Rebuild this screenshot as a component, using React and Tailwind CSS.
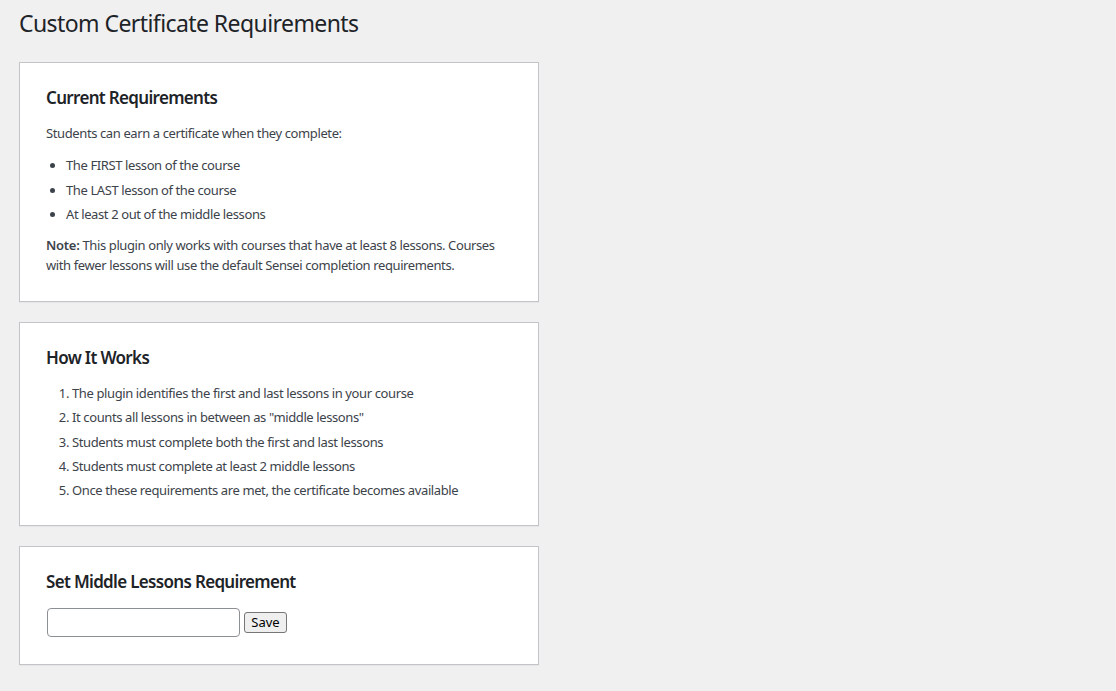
export default function App() {
  const font = { fontFamily: '"Noto Sans", "Open Sans", sans-serif' };
  return (
    <div className="min-h-[691px] bg-[#f0f0f1] text-[#3c434a] text-[13px] tracking-[-0.03em]" style={font}>
      <div className="pl-[19px] pt-[8px] pb-[20px]">
        <h1 className="text-[23px] leading-[30px] font-normal text-[#1d2327] tracking-[-0.025em]">Custom Certificate Requirements</h1>

        <div className="w-[520px] mt-[24px] bg-white border border-[#c3c4c7] shadow-[0_1px_1px_rgba(0,0,0,0.04)] px-[26px] pt-[24px] pb-[26px]">
          <h2 className="text-[17px] leading-[22px] font-semibold text-[#1d2327] tracking-[-0.04em]">Current Requirements</h2>
          <p className="mt-[14px] leading-[20px]">Students can earn a certificate when they complete:</p>
          <ul className="mt-[12px] pl-[20px] list-disc flex flex-col gap-[4.5px]">
            <li className="leading-[20px]">The FIRST lesson of the course</li>
            <li className="leading-[20px]">The LAST lesson of the course</li>
            <li className="leading-[20px]">At least 2 out of the middle lessons</li>
          </ul>
          <p className="mt-[11px] leading-[20px]">
            <strong className="font-semibold tracking-[-0.02em]">Note:</strong>{" "}This plugin only works with courses that have at least 8 lessons. Courses with fewer lessons will use the default Sensei completion requirements.
          </p>
        </div>

        <div className="w-[520px] mt-[20px] bg-white border border-[#c3c4c7] shadow-[0_1px_1px_rgba(0,0,0,0.04)] px-[26px] pt-[24px] pb-[25px]">
          <h2 className="text-[17px] leading-[22px] font-semibold text-[#1d2327] tracking-[-0.04em]">How It Works</h2>
          <ol className="mt-[14px] pl-[26px] list-decimal flex flex-col gap-[4.25px]">
            <li className="leading-[20px]">The plugin identifies the first and last lessons in your course</li>
            <li className="leading-[20px]">It counts all lessons in between as "middle lessons"</li>
            <li className="leading-[20px]">Students must complete both the first and last lessons</li>
            <li className="leading-[20px]">Students must complete at least 2 middle lessons</li>
            <li className="leading-[20px]">Once these requirements are met, the certificate becomes available</li>
          </ol>
        </div>

        <div className="w-[520px] mt-[20px] bg-white border border-[#c3c4c7] shadow-[0_1px_1px_rgba(0,0,0,0.04)] px-[26px] pt-[24px] pb-[27px]">
          <h2 className="text-[17px] leading-[22px] font-semibold text-[#1d2327] tracking-[-0.04em]">Set Middle Lessons Requirement</h2>
          <div className="mt-[15px] flex items-center gap-[4px] pl-[1px]">
            <input type="text" className="w-[193px] h-[29px] border border-[#8c8f94] rounded-[4px] bg-white px-2 text-[14px] outline-none" />
            <button className="h-[21px] w-[43px] bg-[#efefef] border border-[#767676] rounded-[3px] text-[13px] leading-[19px] text-black tracking-normal">Save</button>
          </div>
        </div>
      </div>
    </div>
  );
}
